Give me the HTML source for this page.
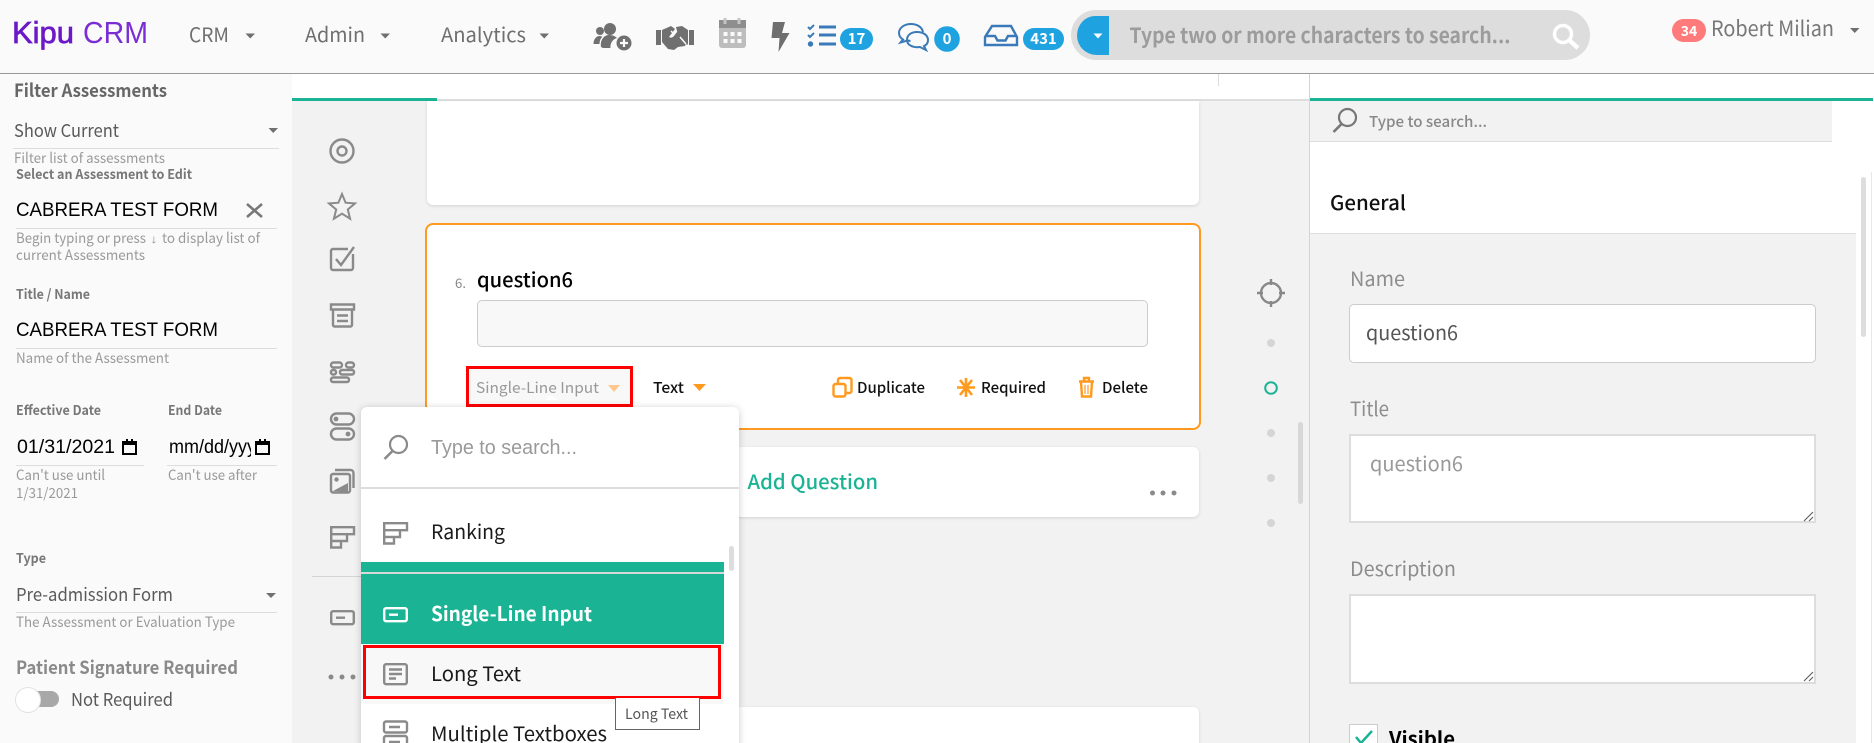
<!DOCTYPE html>
<html lang="en"><head><meta charset="utf-8"><title>Kipu CRM</title>
<style>
html,body{margin:0;padding:0;width:1874px;height:743px;overflow:hidden;background:#fafafa}
#p{position:relative;width:1874px;height:743px;overflow:hidden;background:#fafafa}
.b{position:absolute;box-sizing:border-box}
svg{position:absolute;left:0;top:0}
text{font-family:"Noto Sans CJK SC","Liberation Sans",sans-serif;white-space:pre}
.a{font-family:"Liberation Sans",Arial,sans-serif}
.h{font-weight:700}
</style></head><body><div id="p">
<!-- panels -->
<div class="b" style="left:0;top:0;width:1874px;height:74px;background:#fafafa;border-bottom:1px solid #999"></div>
<div class="b" style="left:292px;top:74px;width:1582px;height:669px;background:#fff"></div>
<div class="b" style="left:292px;top:101px;width:1018px;height:642px;background:#f2f2f2"></div>
<div class="b" style="left:292px;top:99px;width:1018px;height:2px;background:#ddd"></div>
<div class="b" style="left:292px;top:98px;width:145px;height:3px;background:#1ab394"></div>
<div class="b" style="left:1309px;top:74px;width:1px;height:669px;background:#d5d5d5"></div>
<div class="b" style="left:1310px;top:98px;width:563px;height:3px;background:#1ab394"></div>
<div class="b" style="left:1218px;top:74px;width:1px;height:12px;background:#ddd"></div>
<!-- right panel -->
<div class="b" style="left:1310px;top:101px;width:522px;height:41px;background:#f2f2f2;border-bottom:1px solid #ddd"></div>
<div class="b" style="left:1310px;top:233px;width:546px;height:510px;background:#f2f2f2;border-top:1px solid #ddd"></div>
<div class="b" style="left:1861px;top:177px;width:5px;height:160px;background:#ddd;border-radius:3px"></div>
<div class="b" style="left:1871px;top:172px;width:1px;height:571px;background:#e8e8e8"></div>
<div class="b" style="left:1298px;top:422px;width:5px;height:82px;background:#d8d8d8;border-radius:3px"></div>
<div class="b" style="left:1349px;top:304px;width:467px;height:59px;background:#fff;border:1px solid #ccc;border-radius:5px"></div>
<div class="b" style="left:1349px;top:434px;width:467px;height:89px;background:#fff;border:2px solid #ddd"></div>
<div class="b" style="left:1349px;top:594px;width:467px;height:90px;background:#fff;border:2px solid #ddd"></div>
<div class="b" style="left:1349px;top:724px;width:29px;height:19px;background:#fff;border:1px solid #ccc;border-bottom:0"></div>
<!-- cards -->
<div class="b" style="left:427px;top:101px;width:772px;height:104px;background:#fff;border-radius:0 0 6px 6px;box-shadow:0 1px 3px rgba(0,0,0,.13)"></div>
<div class="b" style="left:425px;top:223px;width:776px;height:207px;background:#fff;border:2.5px solid #ff9a1f;border-radius:8px"></div>
<div class="b" style="left:477px;top:300px;width:671px;height:47px;background:#f8f8f8;border:1px solid #ccc;border-radius:5px"></div>
<div class="b" style="left:466px;top:366px;width:167px;height:41px;background:#f8f8f8;border:3px solid #f00"></div>
<div class="b" style="left:427px;top:447px;width:772px;height:70px;background:#fff;border-radius:6px;box-shadow:0 1px 3px rgba(0,0,0,.13)"></div>
<div class="b" style="left:427px;top:707px;width:772px;height:60px;background:#fff;border-radius:6px;box-shadow:0 1px 3px rgba(0,0,0,.13)"></div>
<!-- rail divider -->
<div class="b" style="left:312px;top:576px;width:60px;height:1px;background:#d5d5d5"></div>
<!-- dropdown -->
<div class="b" style="left:361px;top:407px;width:378px;height:360px;background:#fff;border-radius:6px;box-shadow:0 1px 8px rgba(0,0,0,.2)"></div>
<div class="b" style="left:361px;top:487px;width:378px;height:2px;background:#ddd"></div>
<div class="b" style="left:361px;top:562px;width:363px;height:82px;background:#1ab394"></div>
<div class="b" style="left:361px;top:572px;width:363px;height:2px;background:#d8d8d8"></div>
<div class="b" style="left:361px;top:644px;width:363px;height:60px;background:#f8f8f8"></div>
<div class="b" style="left:363px;top:645px;width:358px;height:54px;border:3px solid #f00"></div>
<div class="b" style="left:729px;top:546px;width:5px;height:25px;background:#ddd;border-radius:3px"></div>
<div class="b" style="left:615px;top:698px;width:85px;height:32px;background:#fff;border:1px solid #666;border-top:0"></div>

<svg width="1874" height="743" viewBox="0 0 1874 743" xmlns="http://www.w3.org/2000/svg">
<defs>
<clipPath id="dc"><rect x="165" y="430" width="86" height="34"/></clipPath>
<g id="rank" fill="none" stroke="currentColor" stroke-width="2.4"><path d="M1.200 1.200H24V8.200H17V15H11V21.500H1.200ZM1.200 8.200H17M1.200 15H11"/></g>
<g id="inp" fill="none" stroke="currentColor" stroke-width="2.4"><rect x="1.200" y="1.200" width="22.600" height="13" rx="2"/><path d="M6 7.700H15"/></g>
<g id="lng" fill="none" stroke="currentColor" stroke-width="2.4"><rect x="1.200" y="1.200" width="22.600" height="20" rx="2"/><path d="M6 6.500H19M6 11H19M6 15.500H13"/></g>
<g id="sr" fill="none" stroke="currentColor"><circle cx="15.500" cy="9.500" r="8.500" stroke-width="2.200"/><path d="M9.500 16L1.500 24" stroke-width="2.600"/></g>
</defs>

<!-- logo + nav -->
<text x="12" y="43" font-size="31" class="a" fill="#6a18c8" stroke="#6a18c8" stroke-width=".7" textLength="62" lengthAdjust="spacingAndGlyphs">Kipu</text>
<text x="83" y="43" font-size="31" class="a" fill="#7a2dd4" textLength="65" lengthAdjust="spacingAndGlyphs">CRM</text>
<g font-size="20" fill="#6f6f6f">
<text x="189" y="42" textLength="40" lengthAdjust="spacingAndGlyphs">CRM</text>
<text x="305" y="42" textLength="60" lengthAdjust="spacingAndGlyphs">Admin</text>
<text x="441" y="42" textLength="85" lengthAdjust="spacingAndGlyphs">Analytics</text>
</g>
<g fill="#6f6f6f"><path d="M245.500 33.500h9.500l-4.750 5z"/><path d="M380.500 33.500h9.500l-4.750 5z"/><path d="M539.500 33.500h9.500l-4.750 5z"/></g>

<!-- header icons -->
<g fill="#707070">
<circle cx="600" cy="31" r="4"/><circle cx="610" cy="29" r="6"/>
<path d="M593.500 44c0-5 3-8 6-8 1 0 2 .3 2.800.8-1.800 1.700-2.800 4.200-2.800 7.200z"/>
<path d="M601 47c-1-7 3-12 8-12 3 0 6 1 8 3-4 1-7 5-6.500 10H603z"/>
<circle cx="624" cy="43" r="7.500"/>
</g>
<path d="M620 43h8M624 39v8" stroke="#fafafa" stroke-width="2.200"/>
<g fill="#707070">
<rect x="656" y="30" width="5" height="15"/><rect x="689" y="30" width="5" height="15"/>
<path d="M662 30l9-4 4 3-6 8c2 1 3 1 5-1l3-4 9 9v3l-1 2-7 1-4 3-6-1-6-7z"/><path d="M676 27l6-1 6 4v14l-1 1-9-10z"/>
</g>
<path d="M671 31l3 3M680 37l6 7" stroke="#fafafa" stroke-width="1.500"/>
<rect x="719" y="20" width="27" height="28" rx="3" fill="#bdbdbd"/><rect x="719" y="20" width="27" height="8" fill="#8e8e8e"/>
<path d="M725 18v6M739 18v6" stroke="#c4c4c4" stroke-width="3"/>
<g fill="#fafafa"><rect x="723.500" y="32" width="4" height="4"/><rect x="730.500" y="32" width="4" height="4"/><rect x="737.500" y="32" width="4" height="4"/><rect x="723.500" y="39" width="4" height="4"/><rect x="730.500" y="39" width="4" height="4"/><rect x="737.500" y="39" width="4" height="4"/></g>
<path d="M773 22h12l-3 11h7.500l-11 19 1-14h-8z" fill="#6f6f6f"/>
<g fill="none" stroke="#3a7ab8"><path d="M808 27l2 2 4-4M808 35l2 2 4-4" stroke-width="2"/><path d="M819 27h17M819 35h17M819 44h17" stroke-width="3"/></g>
<circle cx="810.500" cy="44" r="2.700" fill="#3a7ab8"/>
<rect x="840" y="28" width="33" height="22" rx="11" fill="#1fa2e0"/>
<g fill="none" stroke="#3a7ab8" stroke-width="2"><path d="M911 24c-7 0-12 4-12 9 0 3 1.500 5 4 6.500l-2.500 3 7-2c1 .3 2 .4 3 .4"/><path d="M911 24c6 0 11 3 12 8"/><path d="M917 32c6 0 11 3 11 8 0 3-1.500 5-4 6l2 4-6-3c-7 1-13-2-13-7 0-5 4-8 10-8z"/></g>
<circle cx="947" cy="39" r="12.800" fill="#1fa2e0"/>
<g fill="none" stroke="#3a7ab8" stroke-width="2.400"><path d="M992 26h19l6 11v8h-32v-8z"/><path d="M985 36h10l2.500 4.500h8l2.500-4.500h9"/></g>
<rect x="1023" y="28" width="41" height="22" rx="11" fill="#1fa2e0"/>
<g class="h" fill="#fff" font-size="15" text-anchor="middle"><text x="856.500" y="44">17</text><text x="947" y="44">0</text><text x="1043.500" y="44">431</text></g>

<!-- search -->
<rect x="1071" y="10" width="519" height="50" rx="25" fill="#ddd"/>
<path d="M1109 16h-14a18 19.500 0 0 0-18 19.500a19.500 19.500 0 0 0 19.500 19.500H1109z" fill="#1fa2e0"/>
<path d="M1093.500 33.500h9l-4.500 5z" fill="#fff"/>
<text x="1129.500" y="43" font-size="21" class="h" fill="#9c9c9c" textLength="381" lengthAdjust="spacingAndGlyphs">Type two or more characters to search...</text>
<circle cx="1563" cy="34" r="8.500" fill="none" stroke="#fff" stroke-width="3.500"/><path d="M1569 40l9 8" stroke="#fff" stroke-width="4.500"/>

<rect x="1672" y="19" width="34" height="23" rx="11.500" fill="#ff7b7b"/>
<text x="1689" y="36" font-size="14" class="h" fill="#fff" text-anchor="middle">34</text>
<text x="1711" y="36" font-size="21" fill="#777" textLength="123" lengthAdjust="spacingAndGlyphs">Robert Milian</text>
<path d="M1850 28h9.500l-4.750 5z" fill="#6f6f6f"/>

<!-- left sidebar -->
<text x="14" y="97" font-size="18" class="h" fill="#666" textLength="153" lengthAdjust="spacingAndGlyphs">Filter Assessments</text>
<text x="14" y="137" font-size="18" fill="#5a5a5a" textLength="105" lengthAdjust="spacingAndGlyphs">Show Current</text>
<path d="M268.500 128h9.500l-4.750 5z" fill="#707070"/>
<path d="M13 148.500H279" stroke="#ddd"/>
<text x="14" y="163" font-size="14" fill="#9a9a9a" textLength="151" lengthAdjust="spacingAndGlyphs">Filter list of assessments</text>
<text x="16" y="179" font-size="13.500" class="h" fill="#777" textLength="176" lengthAdjust="spacingAndGlyphs">Select an Assessment to Edit</text>
<text x="16" y="216" font-size="19" class="a" fill="#000" textLength="202" lengthAdjust="spacingAndGlyphs">CABRERA TEST FORM</text>
<path d="M247 204l15 13M262 204l-15 13" stroke="#777" stroke-width="2.500"/>
<path d="M16 228.500H277" stroke="#ddd"/>
<text x="16" y="243" font-size="14" fill="#9a9a9a" textLength="130" lengthAdjust="spacingAndGlyphs">Begin typing or press</text>
<text x="150" y="243" font-size="12" class="a" fill="#9a9a9a" textLength="8" lengthAdjust="spacingAndGlyphs">↓</text>
<text x="162" y="243" font-size="14" fill="#9a9a9a" textLength="98" lengthAdjust="spacingAndGlyphs">to display list of</text>
<text x="16" y="260" font-size="14" fill="#9a9a9a" textLength="129" lengthAdjust="spacingAndGlyphs">current Assessments</text>
<text x="16" y="299" font-size="13.500" class="h" fill="#777" textLength="74" lengthAdjust="spacingAndGlyphs">Title / Name</text>
<text x="16" y="336" font-size="19" class="a" fill="#000" textLength="202" lengthAdjust="spacingAndGlyphs">CABRERA TEST FORM</text>
<path d="M16 348.500H277" stroke="#ddd"/>
<text x="16" y="363" font-size="14" fill="#9a9a9a" textLength="153" lengthAdjust="spacingAndGlyphs">Name of the Assessment</text>
<text x="16" y="415" font-size="13.500" class="h" fill="#777" textLength="85" lengthAdjust="spacingAndGlyphs">Effective Date</text>
<text x="168" y="415" font-size="13.500" class="h" fill="#777" textLength="54" lengthAdjust="spacingAndGlyphs">End Date</text>
<text x="17" y="453" font-size="19" class="a" fill="#000" textLength="98" lengthAdjust="spacingAndGlyphs">01/31/2021</text>
<g clip-path="url(#dc)"><text x="169" y="453" font-size="19" class="a" fill="#000" textLength="96" lengthAdjust="spacingAndGlyphs">mm/dd/yyyy</text></g>
<g fill="none" stroke="#000" stroke-width="2"><rect x="123" y="442" width="13" height="12"/><rect x="256" y="442" width="13" height="12"/></g>
<path d="M123 441h13v4h-13zM256 441h13v4h-13zM126 439h2v3h-2zM131 439h2v3h-2zM259 439h2v3h-2zM264 439h2v3h-2z" fill="#000"/>
<path d="M16 465.500H144M167 465.500H277" stroke="#ddd"/>
<text x="16" y="480" font-size="14" fill="#9a9a9a" textLength="89" lengthAdjust="spacingAndGlyphs">Can't use until</text>
<text x="16" y="498" font-size="14" fill="#9a9a9a" textLength="62" lengthAdjust="spacingAndGlyphs">1/31/2021</text>
<text x="168" y="480" font-size="14" fill="#9a9a9a" textLength="89" lengthAdjust="spacingAndGlyphs">Can't use after</text>
<text x="16" y="563" font-size="13.500" class="h" fill="#777" textLength="30" lengthAdjust="spacingAndGlyphs">Type</text>
<text x="16" y="601" font-size="18" fill="#5a5a5a" textLength="157" lengthAdjust="spacingAndGlyphs">Pre-admission Form</text>
<path d="M266 593h10l-5 5z" fill="#707070"/>
<path d="M16 612.500H277" stroke="#ddd"/>
<text x="16" y="627" font-size="14" fill="#9a9a9a" textLength="219" lengthAdjust="spacingAndGlyphs">The Assessment or Evaluation Type</text>
<text x="16" y="674" font-size="18" class="h" fill="#8a8a8a" textLength="222" lengthAdjust="spacingAndGlyphs">Patient Signature Required</text>
<rect x="20" y="691" width="39" height="16" rx="8" fill="#a8a8a8"/>
<circle cx="28" cy="700" r="12.500" fill="#fff" stroke="#e2e2e2"/>
<text x="71" y="706" font-size="18" fill="#5a5a5a" textLength="102" lengthAdjust="spacingAndGlyphs">Not Required</text>

<!-- rail icons -->
<g fill="none" stroke="#8a8a8a" stroke-width="2.400" color="#8a8a8a">
<circle cx="342" cy="151" r="11.500"/><circle cx="342" cy="151" r="4.500"/>
<path d="M342 194l3.600 8.700 9.400.7-7.200 6.100 2.300 9.200-8.100-5-8.100 5 2.300-9.200-7.200-6.100 9.400-.7z" stroke-width="2"/>
<path d="M353 254v14a2 2 0 0 1-2 2h-18a2 2 0 0 1-2-2v-17a2 2 0 0 1 2-2h15"/><path d="M336 259l5 6 13-18"/>
<path d="M331 304.500h23v5h-23zM333 310v15a1.500 1.500 0 0 0 1.500 1.500h16a1.500 1.500 0 0 0 1.500-1.500v-15"/><path d="M337 315.500h11M337 321h11"/>
<rect x="331" y="362.500" width="11" height="5" rx="2.500"/><rect x="346" y="362.500" width="8" height="5" rx="2.500"/>
<rect x="331" y="370" width="5" height="4.500" rx="2"/><rect x="340" y="370" width="14" height="4.500" rx="2"/>
<rect x="331" y="377.500" width="18" height="4.500" rx="2"/>
<rect x="331" y="413.500" width="23" height="11" rx="5.500"/><rect x="331" y="428.500" width="23" height="11" rx="5.500"/>
<rect x="331" y="474" width="19" height="18.500" rx="2"/><path d="M335 470h15a3 3 0 0 1 3.500 3v15"/>
<use href="#rank" x="330" y="526" color="#8a8a8a"/>
<use href="#inp" x="330" y="610" color="#8a8a8a"/>
</g>
<g fill="#8a8a8a"><circle cx="336" cy="419" r="2.400"/><circle cx="348" cy="434" r="2.400"/><circle cx="336.500" cy="479.500" r="2.200"/><path d="M333 491l15-8v9z"/><circle cx="331" cy="677" r="2.500"/><circle cx="342" cy="677" r="2.500"/><circle cx="353" cy="677" r="2.500"/></g>

<!-- question card -->
<text x="455" y="288" font-size="13" fill="#888" textLength="11" lengthAdjust="spacingAndGlyphs">6.</text>
<text x="477" y="287" font-size="20" fill="#000" font-weight="500" textLength="96" lengthAdjust="spacingAndGlyphs">question6</text>
<text x="476" y="393" font-size="15" fill="#999" textLength="123" lengthAdjust="spacingAndGlyphs">Single-Line Input</text>
<path d="M608 385h12l-6 7z" fill="#ffc78d"/>
<path d="M545 400l6-5 6 5z" fill="#fff"/>
<g font-size="15" fill="#111" font-weight="500">
<text x="653" y="393" textLength="31" lengthAdjust="spacingAndGlyphs">Text</text>
<text x="857" y="393" textLength="68" lengthAdjust="spacingAndGlyphs">Duplicate</text>
<text x="981" y="393" textLength="65" lengthAdjust="spacingAndGlyphs">Required</text>
<text x="1102" y="393" textLength="46" lengthAdjust="spacingAndGlyphs">Delete</text>
</g>
<path d="M693 384h13l-6.500 7z" fill="#ff9a1f"/>
<g fill="none" stroke="#ff9a1f" stroke-width="2.400">
<rect x="833.500" y="384" width="12" height="12.500" rx="2"/><path d="M838 384v-4a2 2 0 0 1 2-2h9.500a2 2 0 0 1 2 2v11a2 2 0 0 1-2 2h-4"/>
<path d="M966 378v19M957 387.500h18M960 380l12 15M972 380l-12 15" stroke-width="2.600"/>
<path d="M1079 381.500h15M1084 381v-3h5v3M1081 382l1 14.500h9l1-14.500"/><path d="M1085 385v9M1088 385v9" stroke-width="1.200"/>
</g>
<text x="747.500" y="489" font-size="20" fill="#1ab394" font-weight="500" textLength="130.500" lengthAdjust="spacingAndGlyphs">Add Question</text>
<g fill="#8a8a8a"><circle cx="1152.500" cy="493" r="2.500"/><circle cx="1163" cy="493" r="2.500"/><circle cx="1174" cy="493" r="2.500"/></g>

<!-- timeline -->
<g fill="none" stroke="#888" stroke-width="2.400"><circle cx="1271" cy="293" r="10"/><path d="M1271 279v6M1271 301v6M1257 293h6M1279 293h6"/></g>
<g fill="#d5d5d5"><circle cx="1271" cy="343" r="4"/><circle cx="1271" cy="433" r="4"/><circle cx="1271" cy="478" r="4"/><circle cx="1271" cy="523" r="4"/></g>
<circle cx="1271" cy="388" r="5.800" fill="none" stroke="#1ab394" stroke-width="2"/>

<!-- right panel text -->
<use href="#sr" x="1332" y="108" color="#777"/>
<text x="1369" y="127" font-size="15" fill="#888" font-weight="500" textLength="118" lengthAdjust="spacingAndGlyphs">Type to search...</text>
<text x="1330" y="210" font-size="20" fill="#111" font-weight="500" textLength="76" lengthAdjust="spacingAndGlyphs">General</text>
<g font-size="20" fill="#8d8d8d">
<text x="1350" y="286" textLength="55" lengthAdjust="spacingAndGlyphs">Name</text>
<text x="1350" y="416" textLength="39" lengthAdjust="spacingAndGlyphs">Title</text>
<text x="1350" y="576" textLength="106" lengthAdjust="spacingAndGlyphs">Description</text>
</g>
<text x="1366" y="340" font-size="20" fill="#555" textLength="92" lengthAdjust="spacingAndGlyphs">question6</text>
<text x="1370" y="471" font-size="20" fill="#999" textLength="93" lengthAdjust="spacingAndGlyphs">question6</text>
<g stroke="#555" stroke-width="1"><path d="M1804 521l9-9M1809 521l4-4M1804 681l9-9M1809 681l4-4"/></g>
<path d="M1356 737l5 6 11-12" fill="none" stroke="#1ab394" stroke-width="2.500"/>
<text x="1389" y="746" font-size="20" class="h" fill="#000" textLength="66" lengthAdjust="spacingAndGlyphs">Visible</text>

<!-- dropdown text -->
<use href="#sr" x="383" y="435" color="#8a8a8a"/>
<text x="431" y="454" font-size="20" class="a" fill="#9a9a9a" textLength="146" lengthAdjust="spacingAndGlyphs">Type to search...</text>
<use href="#rank" x="383" y="522" color="#8a8a8a"/>
<text x="431" y="539" font-size="20" fill="#1a1a1a" textLength="74" lengthAdjust="spacingAndGlyphs">Ranking</text>
<use href="#inp" x="383" y="607" color="#fff"/>
<text x="431" y="621" font-size="20" class="h" fill="#fff" textLength="161" lengthAdjust="spacingAndGlyphs">Single-Line Input</text>
<use href="#lng" x="383" y="663" color="#8a8a8a"/>
<text x="431" y="681" font-size="20" fill="#1a1a1a" textLength="90" lengthAdjust="spacingAndGlyphs">Long Text</text>
<text x="625" y="719" font-size="14.500" fill="#555" textLength="63" lengthAdjust="spacingAndGlyphs">Long Text</text>
<g fill="none" stroke="#8a8a8a" stroke-width="2.400"><rect x="384" y="721.500" width="23" height="11" rx="2"/><rect x="384" y="736" width="23" height="11" rx="2"/><path d="M389 727h11M389 742h11"/></g>
<text x="431" y="741" font-size="20" fill="#1a1a1a" textLength="176" lengthAdjust="spacingAndGlyphs">Multiple Textboxes</text>
</svg>
</div></body></html>
